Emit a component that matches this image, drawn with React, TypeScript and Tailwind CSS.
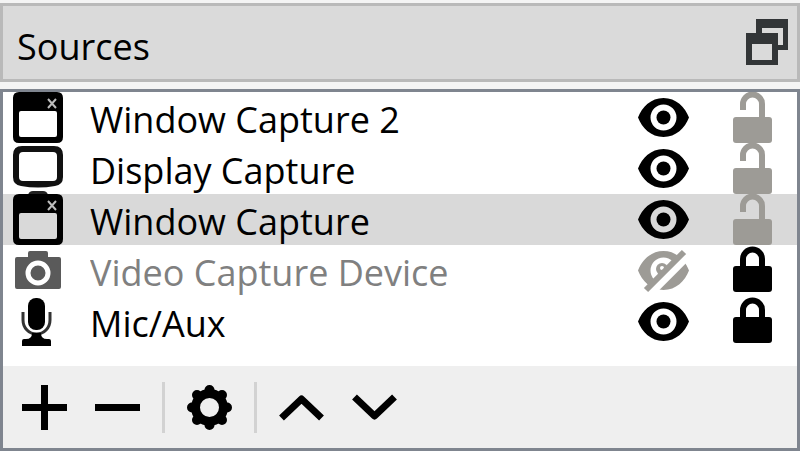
import React, { useState } from 'react';

type SourceKind = 'window' | 'display' | 'camera' | 'mic';

interface Source {
  id: number;
  name: string;
  kind: SourceKind;
  visible: boolean;
  locked: boolean;
}

const initialSources: Source[] = [
  { id: 1, name: 'Window Capture 2', kind: 'window', visible: true, locked: false },
  { id: 2, name: 'Display Capture', kind: 'display', visible: true, locked: false },
  { id: 3, name: 'Window Capture', kind: 'window', visible: true, locked: false },
  { id: 4, name: 'Video Capture Device', kind: 'camera', visible: false, locked: true },
  { id: 5, name: 'Mic/Aux', kind: 'mic', visible: true, locked: true },
];

const SourceIcon: React.FC<{ kind: SourceKind }> = ({ kind }) => (
  <svg viewBox="0 0 50 51" className="h-[51px] w-[50px] shrink-0 overflow-visible" aria-hidden="true">
    {kind === 'window' && (
      <>
        <path
          fillRule="evenodd"
          d="M6 0H44Q50 0 50 6V45Q50 51 44 51H6Q0 51 0 45V6Q0 0 6 0ZM8 19Q6 19 6 21V43Q6 45 8 45H42Q44 45 44 43V21Q44 19 42 19Z"
        />
        <path d="M35 7l8 9M43 7l-8 9" stroke="#bdbdbd" strokeWidth="2" />
      </>
    )}
    {kind === 'display' && (
      <>
        <path
          fillRule="evenodd"
          fill="#111"
          d="M9 3H41Q50 3 50 12V34Q50 42 42 43Q25 46 8 43Q0 42 0 34V12Q0 3 9 3ZM10 9Q6 9 6 13V34Q6 38 10 38H40Q44 38 44 34V13Q44 9 40 9Z"
        />
        <path d="M15 52q1-4 5-4h10q4 0 5 4z" fill="#222" />
      </>
    )}
    {kind === 'camera' && (
      <>
        <path d="M4 12H15V8Q15 6 17 6H33Q35 6 35 8V12H46Q48 12 48 14V42Q48 44 46 44H4Q2 44 2 42V14Q2 12 4 12Z" fill="#5a5a5a" />
        <circle cx="25" cy="28" r="10" fill="none" stroke="#fff" strokeWidth="5" />
      </>
    )}
    {kind === 'mic' && (
      <>
        <rect x="15" y="2" width="17" height="32" rx="8" />
        <path d="M10 16V24C10 32 16 38 23.500 38S37 32 37 24V16" fill="none" stroke="#333" strokeWidth="3" />
        <path d="M19 37H28Q28 43 34 43H36Q38 43 38 45V50H9V45Q9 43 11 43H13Q19 43 19 37Z" />
      </>
    )}
  </svg>
);

const eyePath =
  'M0 25.500C4 15 13 6 25.500 6S47 15 51 25.500C47 36 38 45 25.500 45S4 36 0 25.500ZM25.500 12.500A13 13 0 1 0 25.500 38.500A13 13 0 1 0 25.500 12.500Z';

const EyeIcon: React.FC<{ visible: boolean }> = ({ visible }) =>
  visible ? (
    <svg viewBox="0 0 51 51" className="size-[51px]" aria-hidden="true">
      <path fillRule="evenodd" d={eyePath} />
      <circle cx="25.500" cy="25.500" r="7" />
    </svg>
  ) : (
    <svg viewBox="0 0 51 51" className="size-[51px]" aria-hidden="true" fill="#9d9b96">
      <mask id="eye-cut">
        <rect width="51" height="51" fill="#fff" />
        <path d="M0 60L60 0" stroke="#000" strokeWidth="9" />
      </mask>
      <g mask="url(#eye-cut)">
        <path fillRule="evenodd" d={eyePath} />
        <path d="M40 23V40H23Z" />
        <circle cx="24" cy="24" r="6" />
        <circle cx="24" cy="23" r="2" fill="#fff" />
      </g>
      <path d="M8 45L46 7" stroke="#9d9b96" strokeWidth="6" />
    </svg>
  );

const LockIcon: React.FC<{ locked: boolean }> = ({ locked }) =>
  locked ? (
    <svg viewBox="0 0 39 51" className="h-[51px] w-[39px]" aria-hidden="true">
      <rect y="21" width="39" height="26" rx="3" />
      <path d="M10 24V14a9.500 9.500 0 0 1 19 0V24" fill="none" stroke="#000" strokeWidth="6" />
    </svg>
  ) : (
    <svg viewBox="0 0 39 51" className="h-[51px] w-[39px]" aria-hidden="true">
      <rect y="25" width="39" height="26" rx="3" fill="#9d9b96" />
      <path d="M10 18V12a9.500 9.500 0 0 1 19 0V27" fill="none" stroke="#9d9b96" strokeWidth="6" />
    </svg>
  );

const ToolButton: React.FC<{ label: string; onClick?: () => void; children: React.ReactNode }> = ({
  label,
  onClick,
  children,
}) => (
  <button type="button" aria-label={label} onClick={onClick}>
    <svg viewBox="0 0 45 45" className="size-[45px]" fill="none" stroke="#000" strokeWidth="7" aria-hidden="true">
      {children}
    </svg>
  </button>
);

const Separator = () => <div className="mx-[22px] h-[51px] w-[3px] bg-[#d2d2d2]" />;

export default function App() {
  const [sources, setSources] = useState(initialSources);
  const [selected, setSelected] = useState(3);

  const toggle = (id: number, key: 'visible' | 'locked') => {
    setSources(sources.map((s) => (s.id === id ? { ...s, [key]: !s[key] } : s)));
  };

  const move = (step: number) => {
    const from = sources.findIndex((s) => s.id === selected);
    const to = from + step;
    if (from < 0 || to < 0 || to >= sources.length) return;
    const next = [...sources];
    [next[from], next[to]] = [next[to], next[from]];
    setSources(next);
  };

  return (
    <div className="flex min-h-screen flex-col bg-[#f4f4f4] pt-[3px] font-['Open_Sans','Noto_Sans',sans-serif] text-[36px] text-black">
      <header className="flex h-[79px] items-center justify-between border-3 border-[#b9b9b9] bg-[#dadada] pr-[9px] pl-3.5">
        <h1 className="pt-2">Sources</h1>
        <button type="button" aria-label="Undock panel">
          <svg viewBox="0 0 42 47" className="h-[47px] w-[42px]" fill="#323537" aria-hidden="true">
            <path fillRule="evenodd" d="M10 0H42V31H32V26H37V9H16V15H10Z" />
            <path fillRule="evenodd" d="M0 14H32V46H0ZM6 25V41H26V25Z" />
          </svg>
        </button>
      </header>

      <main className="mt-[7px] flex flex-1 flex-col border-3 border-[#7f858f] bg-white">
        <ul className="flex-1">
          {sources.map((source) => (
            <li
              key={source.id}
              onClick={() => setSelected(source.id)}
              className={`flex h-[51px] items-center pr-[25px] pl-2.5 ${
                source.id === selected ? 'bg-[#d9d9d9]' : ''
              }`}
            >
              <SourceIcon kind={source.kind} />
              <span
                className={`ml-[27px] flex-1 truncate pt-1 leading-[51px] ${
                  source.visible ? '' : 'text-[#808080]'
                }`}
              >
                {source.name}
              </span>
              <button
                type="button"
                aria-label={`Toggle visibility of ${source.name}`}
                aria-pressed={source.visible}
                onClick={() => toggle(source.id, 'visible')}
              >
                <EyeIcon visible={source.visible} />
              </button>
              <button
                type="button"
                className="ml-11"
                aria-label={`Toggle lock on ${source.name}`}
                aria-pressed={source.locked}
                onClick={() => toggle(source.id, 'locked')}
              >
                <LockIcon locked={source.locked} />
              </button>
            </li>
          ))}
        </ul>

        <footer className="flex h-[82px] items-center bg-[#efefef] pl-[19px]">
          <div className="flex gap-7">
            <ToolButton label="Add source">
              <path d="M22.500 0V45M0 22.500H45" />
            </ToolButton>
            <ToolButton
              label="Remove source"
              onClick={() => setSources(sources.filter((s) => s.id !== selected))}
            >
              <path d="M0 22.500H45" />
            </ToolButton>
          </div>
          <Separator />
          <ToolButton label="Source properties">
            <circle cx="22.500" cy="22.500" r="14" strokeWidth="9" />
            <path
              d="M22.500 5V8M22.500 37V40M5 22.500H8M37 22.500H40M10 10l2 2M33 33l2 2M10 35l2-2M33 12l2-2"
              strokeWidth="10"
              strokeLinecap="round"
            />
          </ToolButton>
          <Separator />
          <div className="flex gap-7">
            <ToolButton label="Move up" onClick={() => move(-1)}>
              <path d="M2.500 33L22.500 14L42.500 33" strokeLinejoin="round" />
            </ToolButton>
            <ToolButton label="Move down" onClick={() => move(1)}>
              <path d="M2.500 12L22.500 31L42.500 12" strokeLinejoin="round" />
            </ToolButton>
          </div>
        </footer>
      </main>
    </div>
  );
}
